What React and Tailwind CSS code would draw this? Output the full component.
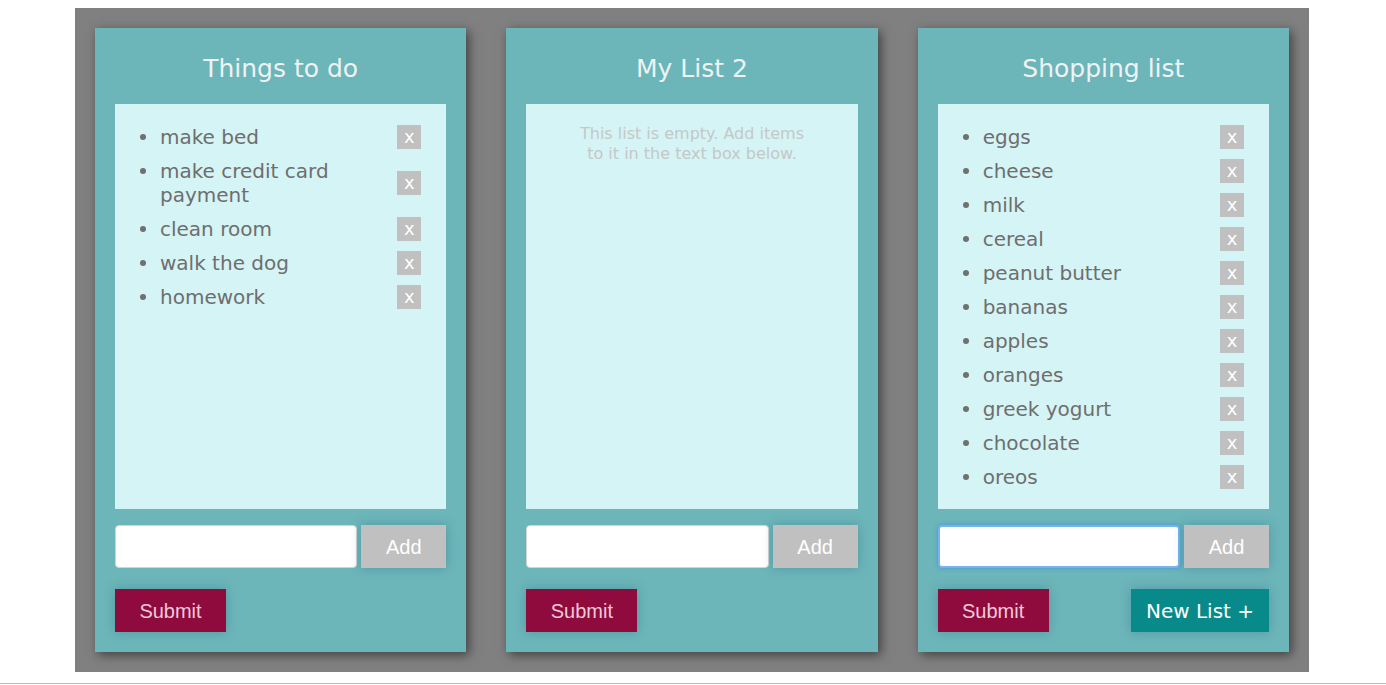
import React from "react";

const lists = [
  {
    title: "Things to do",
    items: ["make bed", "make credit card payment", "clean room", "walk the dog", "homework"],
  },
  { title: "My List 2", items: [] },
  {
    title: "Shopping list",
    items: ["eggs", "cheese", "milk", "cereal", "peanut butter", "bananas", "apples", "oranges", "greek yogurt", "chocolate", "oreos"],
    focused: true,
    newList: true,
  },
];

function Card({ list }) {
  return (
    <div className="flex flex-col bg-[#6cb5b9] p-[20px] shadow-[3px_3px_10px_rgba(0,0,0,0.5)]">
      <div className="h-[42px] mb-[14px] flex items-center justify-center text-[25px] text-[#eef3f3] font-['DejaVu_Sans',sans-serif]">
        {list.title}
      </div>
      <div className="h-[405px] bg-[#d5f4f5] font-['DejaVu_Sans',sans-serif]">
        {list.items.length === 0 ? (
          <div className="w-[244px] mx-auto pt-[20px] text-center text-[16px] leading-[20px] text-[#c4c8c8]">
            This list is empty. Add items to it in the text box below.
          </div>
        ) : (
          <ul className="pt-[21px] pl-[25px] pr-[25px] flex flex-col gap-[10px]">
            {list.items.map((it) => (
              <li key={it} className="flex items-center justify-between">
                <div className="flex items-start">
                  <span className="mt-[9px] w-[6px] h-[6px] rounded-full bg-[#707070] shrink-0"></span>
                  <span className="ml-[14px] w-[220px] text-[20px] leading-[24px] text-[#6e6e6e]">{it}</span>
                </div>
                <span className="w-[24px] h-[24px] bg-[#c0c0c0] text-white text-[18px] leading-[22px] flex items-center justify-center shrink-0">
                  x
                </span>
              </li>
            ))}
          </ul>
        )}
      </div>
      <div className="mt-[16px] flex gap-[4px] h-[43px]">
        <div
          className={
            list.focused
              ? "flex-1 bg-white rounded-[4px] border-[2px] border-[#7ab2ee] shadow-[0_0_4px_rgba(60,140,230,0.8)]"
              : "flex-1 bg-white rounded-[4px] border border-[#d0d4d4]"
          }
        ></div>
        <div className="w-[85px] bg-[#c0c0c0] text-white text-[20px] font-['Liberation_Sans',sans-serif] flex items-center justify-center shadow-[0_0_10px_rgba(30,100,120,0.35)]">
          Add
        </div>
      </div>
      <div className="mt-[21px] flex justify-between h-[43px]">
        <div className="w-[111px] bg-[#8f0b3d] text-[#f1c9da] text-[20px] font-['Liberation_Sans',sans-serif] flex items-center justify-center shadow-[0_0_10px_rgba(30,100,120,0.35)]">
          Submit
        </div>
        {list.newList && (
          <div className="w-[138px] bg-[#088a8b] text-white text-[20px] font-['DejaVu_Sans',sans-serif] flex items-center justify-center shadow-[0_0_10px_rgba(30,100,120,0.35)]">
            New List +
          </div>
        )}
      </div>
    </div>
  );
}

export default function App() {
  return (
    <div className="w-[1386px] h-[685px] bg-white overflow-hidden">
      <div className="pt-[8px]">
        <div className="ml-[75px] w-[1234px] bg-[#808080] p-[20px] grid grid-cols-3 gap-[40px]">
          {lists.map((l) => (
            <Card key={l.title} list={l} />
          ))}
        </div>
      </div>
      <div className="mt-[11px] h-[1px] bg-[#b8b8b8]"></div>
    </div>
  );
}
